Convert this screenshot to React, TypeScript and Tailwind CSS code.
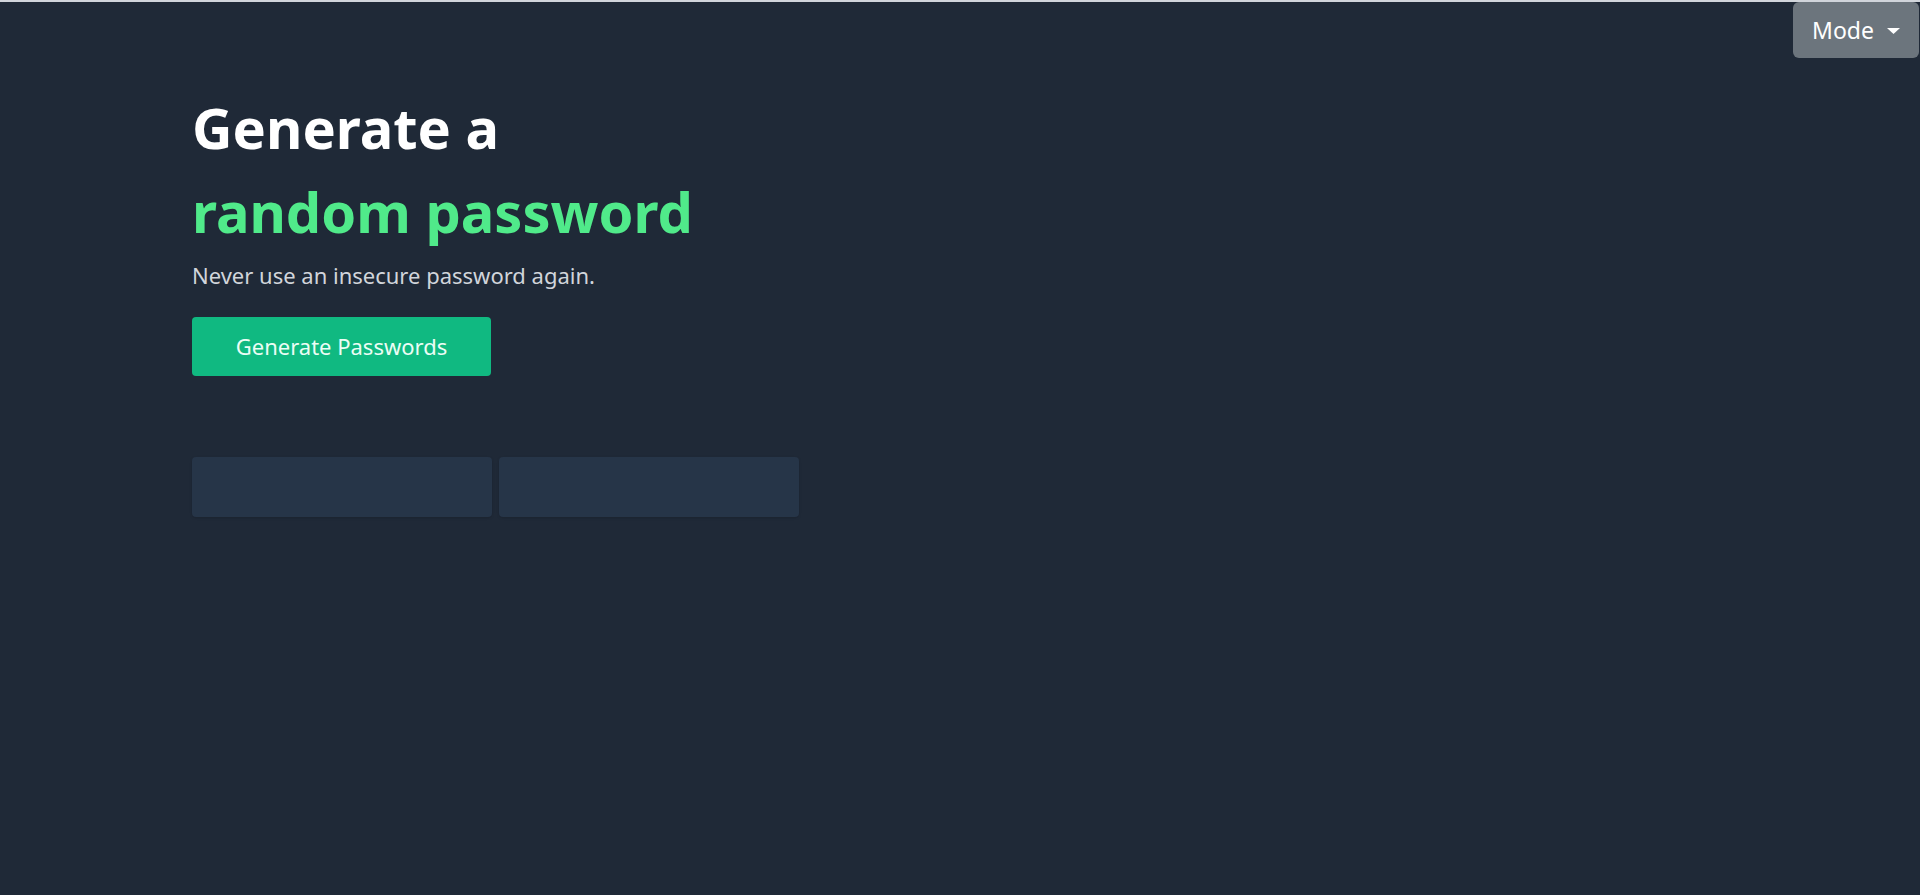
export default function App() {
    return (
        <div className="min-h-screen border-t-2 border-[#d1d5db] bg-[#1f2937] font-['Segoe_UI','Noto_Sans',sans-serif]">
            <header className="flex justify-end pr-px">
                <button className="flex h-[56px] w-[126px] items-center justify-center gap-[13px] rounded-md bg-[#6c757d] text-[23px] text-white">
                    <span>Mode</span>
                    <svg width="13" height="6" viewBox="0 0 13 6" className="mt-px">
                        <path d="M0 0h13L6.5 6z" fill="currentColor" />
                    </svg>
                </button>
            </header>
            <main className="pl-[192px] pt-[27px]">
                <h1 className="text-[56px] font-bold leading-[84px] text-white">
                    Generate a
                    <br />
                    <span className="text-[#50ea8a]">random password</span>
                </h1>
                <p className="mt-[7px] text-[22px] leading-[30px] text-[#d1d5db]">Never use an insecure password again.</p>
                <button className="mt-[27px] h-[59px] w-[299px] rounded-[4px] bg-[#10b981] text-[22px] text-[#ecfdf5]">
                    Generate Passwords
                </button>
                <div className="mt-[81px] flex gap-[7px]">
                    <div className="h-[60px] w-[300px] rounded-[4px] bg-[#263548] shadow-sm" />
                    <div className="h-[60px] w-[300px] rounded-[4px] bg-[#263548] shadow-sm" />
                </div>
            </main>
        </div>
    );
}
